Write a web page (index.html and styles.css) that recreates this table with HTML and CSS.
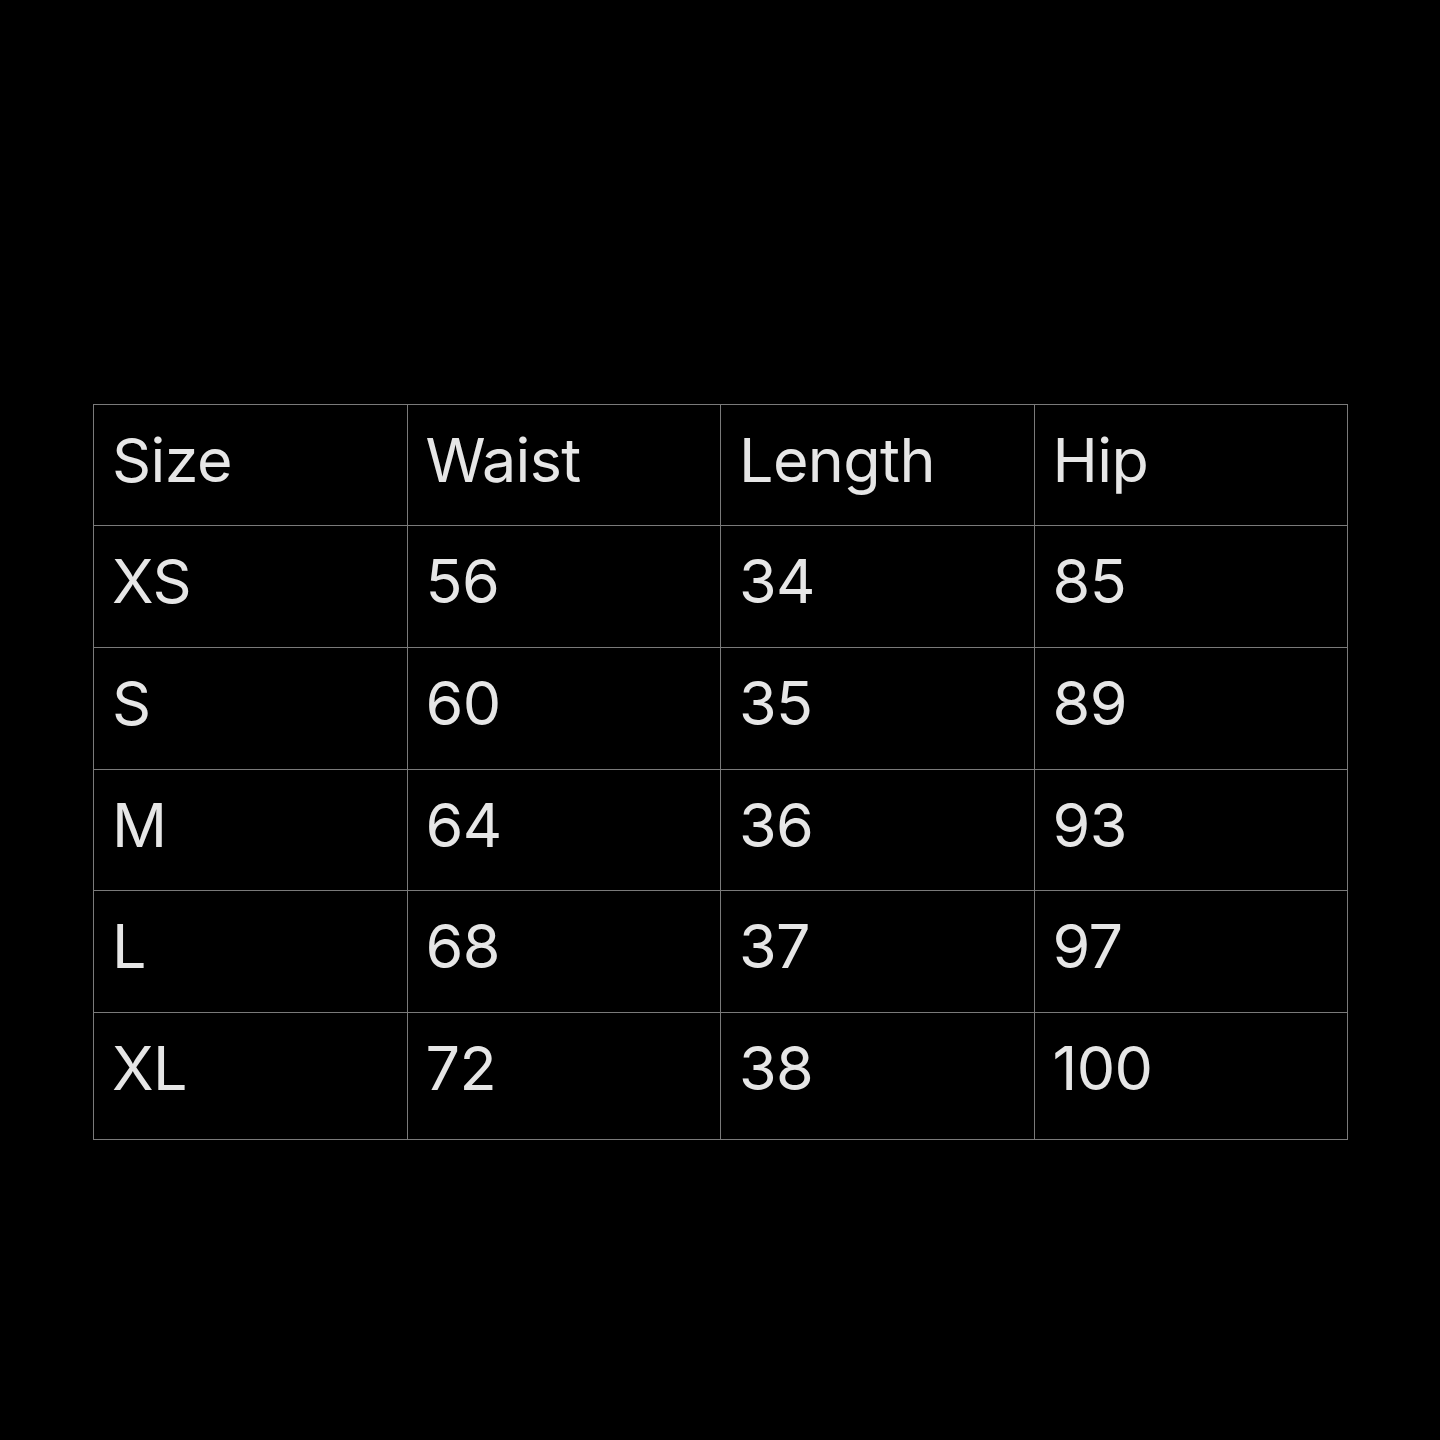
FILE: index.html
```html
<!DOCTYPE html>
<html>
<head>
<meta charset="utf-8">
<link rel="stylesheet" href="styles.css">
</head>
<body>
<main class="page">
  <table class="sizes">
    <tr class="row r1"><td>Size</td><td>Waist</td><td>Length</td><td>Hip</td></tr>
    <tr class="row r2"><td>XS</td><td>56</td><td>34</td><td>85</td></tr>
    <tr class="row r3"><td>S</td><td>60</td><td>35</td><td>89</td></tr>
    <tr class="row r4"><td>M</td><td>64</td><td>36</td><td>93</td></tr>
    <tr class="row r5"><td>L</td><td>68</td><td>37</td><td>97</td></tr>
    <tr class="row r6"><td>XL</td><td>72</td><td>38</td><td>100</td></tr>
  </table>
</main>
</body>
</html>
```
FILE: styles.css
```css
html, body {
  margin: 0;
  padding: 0;
  background: #000;
}
.page {
  width: 1440px;
  height: 1440px;
  padding-top: 404px;
  padding-left: 93px;
  box-sizing: border-box;
}
.sizes {
  border-collapse: collapse;
  table-layout: fixed;
  width: 1255px;
  font-family: Inter, "Open Sans", sans-serif;
  font-size: 61px;
  letter-spacing: -0.6px;
  color: #e6e6e6;
}
.sizes td {
  border: 1px solid #7a7a7a;
  width: 25%;
  height: 121px;
  box-sizing: border-box;
  padding: 25px 0 0 18px;
  vertical-align: top;
  line-height: 1;
}
.r2 td, .r3 td, .r5 td {
  height: 122px;
}
.r6 td {
  height: 127px;
}
```
